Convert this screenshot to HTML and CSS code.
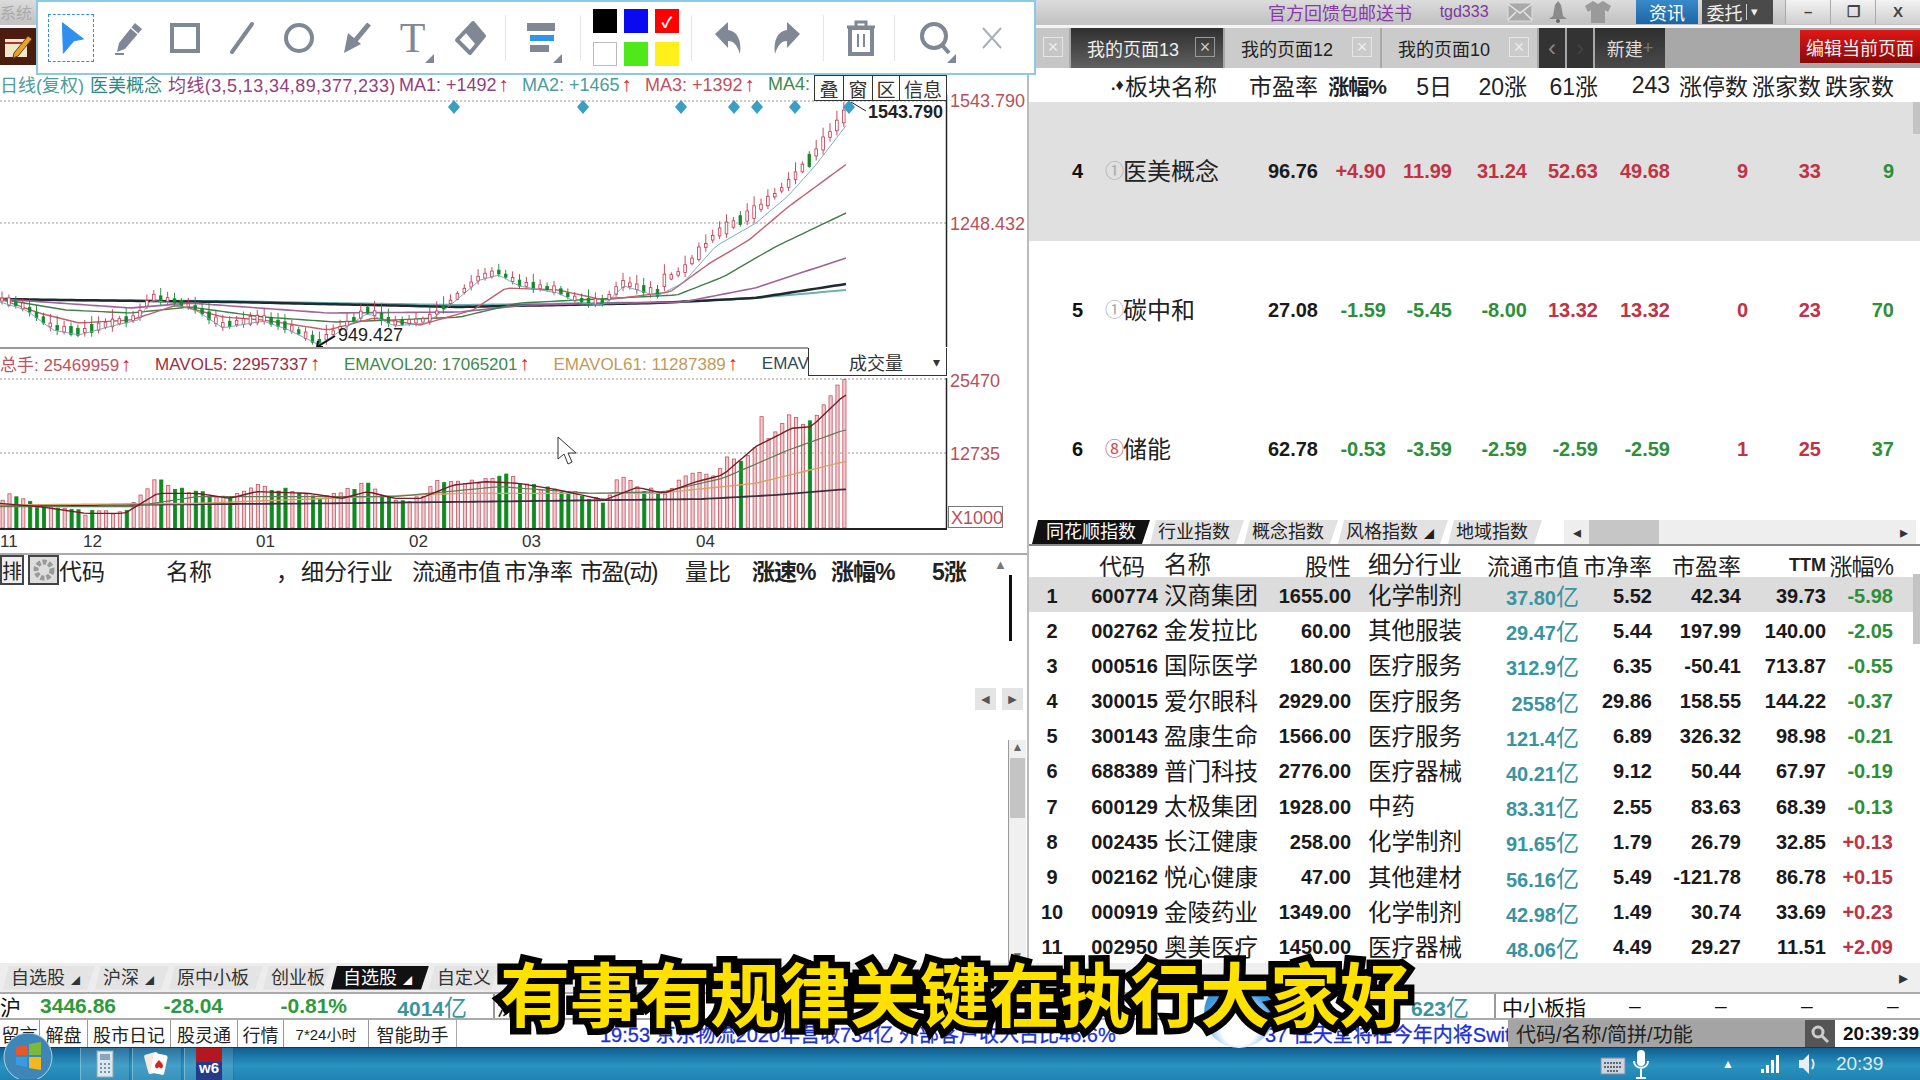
FILE: index.html
```html
<!DOCTYPE html>
<html lang="zh-CN">
<head>
<meta charset="utf-8">
<title>行情软件</title>
<link rel="stylesheet" href="styles.css">
</head>
<body>
<div class="app">

  <header class="topbar">
    <span class="sys">系统</span>
    <span class="promo">官方回馈包邮送书</span>
    <span class="user">tgd333</span>
    <svg class="ti ti-mail" width="26" height="20" viewBox="0 0 26 20"><rect x="1" y="1" width="24" height="18" fill="#a9a9a9" stroke="#ddd"/><path d="M1 2l12 9 12-9M1 18l8-8M25 18l-8-8" fill="none" stroke="#e6e6e6" stroke-width="1.5"/></svg>
    <svg class="ti ti-bell" width="20" height="22" viewBox="0 0 20 22"><path d="M10 0l3 4 2 11 4 3H1l4-3 2-11z" fill="#8a8a8a"/><circle cx="10" cy="20" r="2" fill="#666"/></svg>
    <svg class="ti ti-shirt" width="26" height="22" viewBox="0 0 26 22"><path d="M8 0l5 3 5-3 8 5-3 6-3-2v13H6V9l-3 2-3-6z" fill="#9a9a9a"/></svg>
    <span class="btn-news">资讯</span>
    <span class="btn-order">委托<i class="sep"></i><i class="caret">▾</i></span>
    <span class="winbtns"><b>–</b><b>❐</b><b>X</b></span>
  </header>

  <nav class="tabrow">
    <div class="tabrow-left">
      <div class="brand">
        <svg width="30" height="28" viewBox="0 0 30 28"><rect x="1" y="6" width="22" height="18" fill="#f3e6c8"/><path d="M1 10h22" stroke="#a33" stroke-width="2"/><path d="M10 20L24 3l4 3-14 17-5 2z" fill="#e6a52a" stroke="#6b3a10"/></svg>
      </div>
    </div>
    <div class="tab stub"><span class="x">×</span></div>
    <div class="tab active">我的页面13<span class="x">×</span></div>
    <div class="tab">我的页面12<span class="x">×</span></div>
    <div class="tab">我的页面10<span class="x">×</span></div>
    <div class="navbtn">‹</div>
    <div class="navbtn dim">›</div>
    <div class="newbtn">新建<span>+</span></div>
    <div class="tabspace"></div>
    <div class="editbtn">编辑当前页面</div>
  </nav>

  <main class="main">
    <section class="left">
      <div class="legend">
        <span class="teal lg-a">日线(复权)</span>
        <span class="dteal lg-b">医美概念</span>
        <span class="purple lg-c">均线(3,5,13,34,89,377,233)</span>
        <span class="purple lg-d">MA1: +1492<i class="up">↑</i></span>
        <span class="teal lg-e">MA2: +1465<i class="up">↑</i></span>
        <span class="rose lg-e">MA3: +1392<i class="up">↑</i></span>
        <span class="dgreen lg-e">MA4:</span>
      </div>
      <svg id="price" class="chart price" width="1027" height="252" viewBox="0 95 1027 252"></svg>
      <div class="vol-legend">
        <span class="rose">总手: 25469959<i class="up">↑</i></span>
        <span class="maroon">MAVOL5: 22957337<i class="up">↑</i></span>
        <span class="dgreen">EMAVOL20: 17065201<i class="up">↑</i></span>
        <span class="tan">EMAVOL61: 11287389<i class="up">↑</i></span>
        <span class="navy">EMAV</span>
      </div>
      <svg id="volume" class="chart vol" width="1027" height="150" viewBox="0 378 1027 150"></svg>
      <div class="dates">
        <span class="d1">11</span><span class="d2">12</span><span class="d3">01</span><span class="d4">02</span><span class="d5">03</span><span class="d6">04</span>
      </div>
      <div class="list">
        <div class="list-head">
          <span class="lbox">排</span>
          <span class="lbox gear"><svg width="26" height="26" viewBox="0 0 26 26"><circle cx="13" cy="13" r="8" fill="none" stroke="#999" stroke-width="5" stroke-dasharray="4 2"/></svg></span>
          <span class="h-code">代码</span>
          <span class="h-name">名称</span>
          <span class="h-dot">，</span>
          <span class="h-ind">细分行业</span>
          <span class="h-cap">流通市值</span>
          <span class="h-pb">市净率</span>
          <span class="h-pe">市盈(动)</span>
          <span class="h-vr">量比</span>
          <span class="h-sp bold">涨速%</span>
          <span class="h-ch bold">涨幅%</span>
          <span class="h-5 bold">5涨</span>
        </div>
        <div class="sb-up">▲</div>
        <div class="sb-thumb"></div>
        <div class="sb-h"><span>◄</span><span>►</span></div>
        <div class="sb-col"><span>▲</span><i></i><span>▼</span></div>
      </div>
    </section>

    <section class="right">
      <div class="sector">
        <div class="srow shead">
          <span class="s-no"></span><span class="s-name"><b>.♦</b>板块名称</span><span>市盈率</span><span class="bold-pc">涨幅%</span><span>5日</span><span>20涨</span><span>61涨</span><span>243</span><span>涨停数</span><span>涨家数</span><span>跌家数</span>
        </div>
        <div class="srow sel">
          <span class="s-no">4</span><span class="s-name"><i class="ico">①</i>医美概念</span><span class="k">96.76</span><span class="r">+4.90</span><span class="r">11.99</span><span class="r">31.24</span><span class="r">52.63</span><span class="r">49.68</span><span class="r">9</span><span class="r">33</span><span class="g">9</span>
        </div>
        <div class="srow">
          <span class="s-no">5</span><span class="s-name"><i class="ico">①</i>碳中和</span><span class="k">27.08</span><span class="g">-1.59</span><span class="g">-5.45</span><span class="g">-8.00</span><span class="r">13.32</span><span class="r">13.32</span><span class="r">0</span><span class="r">23</span><span class="g">70</span>
        </div>
        <div class="srow">
          <span class="s-no">6</span><span class="s-name"><i class="ico red">⑧</i>储能</span><span class="k">62.78</span><span class="g">-0.53</span><span class="g">-3.59</span><span class="g">-2.59</span><span class="g">-2.59</span><span class="g">-2.59</span><span class="r">1</span><span class="r">25</span><span class="g">37</span>
        </div>
        <div class="vbar vbar-top"></div>
      </div>

      <div class="idx-tabs">
        <span class="itab on">同花顺指数</span><span class="itab">行业指数</span><span class="itab">概念指数</span><span class="itab">风格指数<i>◢</i></span><span class="itab">地域指数</span>
        <div class="hscroll"><span class="arr">◂</span><i class="thumb"></i><span class="arr end">▸</span></div>
      </div>

      <div class="stocks">
        <div class="row thead"><span></span><span class="hc">代码</span><span class="n">名称</span><span>股性</span><span class="ind">细分行业</span><span>流通市值</span><span>市净率</span><span>市盈率</span><span class="b ttm">TTM</span><span class="pc">涨幅%</span></div>
        <div class="row sel"><span class="no">1</span><span class="b">600774</span><span class="n">汉商集团</span><span class="b">1655.00</span><span class="ind">化学制剂</span><span class="t">37.80<em>亿</em></span><span class="b">5.52</span><span class="b">42.34</span><span class="b">39.73</span><span class="g">-5.98</span></div>
        <div class="row"><span class="no">2</span><span class="b">002762</span><span class="n">金发拉比</span><span class="b">60.00</span><span class="ind">其他服装</span><span class="t">29.47<em>亿</em></span><span class="b">5.44</span><span class="b">197.99</span><span class="b">140.00</span><span class="g">-2.05</span></div>
        <div class="row"><span class="no">3</span><span class="b">000516</span><span class="n">国际医学</span><span class="b">180.00</span><span class="ind">医疗服务</span><span class="t">312.9<em>亿</em></span><span class="b">6.35</span><span class="b">-50.41</span><span class="b">713.87</span><span class="g">-0.55</span></div>
        <div class="row"><span class="no">4</span><span class="b">300015</span><span class="n">爱尔眼科</span><span class="b">2929.00</span><span class="ind">医疗服务</span><span class="t">2558<em>亿</em></span><span class="b">29.86</span><span class="b">158.55</span><span class="b">144.22</span><span class="g">-0.37</span></div>
        <div class="row"><span class="no">5</span><span class="b">300143</span><span class="n">盈康生命</span><span class="b">1566.00</span><span class="ind">医疗服务</span><span class="t">121.4<em>亿</em></span><span class="b">6.89</span><span class="b">326.32</span><span class="b">98.98</span><span class="g">-0.21</span></div>
        <div class="row"><span class="no">6</span><span class="b">688389</span><span class="n">普门科技</span><span class="b">2776.00</span><span class="ind">医疗器械</span><span class="t">40.21<em>亿</em></span><span class="b">9.12</span><span class="b">50.44</span><span class="b">67.97</span><span class="g">-0.19</span></div>
        <div class="row"><span class="no">7</span><span class="b">600129</span><span class="n">太极集团</span><span class="b">1928.00</span><span class="ind">中药</span><span class="t">83.31<em>亿</em></span><span class="b">2.55</span><span class="b">83.63</span><span class="b">68.39</span><span class="g">-0.13</span></div>
        <div class="row"><span class="no">8</span><span class="b">002435</span><span class="n">长江健康</span><span class="b">258.00</span><span class="ind">化学制剂</span><span class="t">91.65<em>亿</em></span><span class="b">1.79</span><span class="b">26.79</span><span class="b">32.85</span><span class="r">+0.13</span></div>
        <div class="row"><span class="no">9</span><span class="b">002162</span><span class="n">悦心健康</span><span class="b">47.00</span><span class="ind">其他建材</span><span class="t">56.16<em>亿</em></span><span class="b">5.49</span><span class="b">-121.78</span><span class="b">86.78</span><span class="r">+0.15</span></div>
        <div class="row"><span class="no">10</span><span class="b">000919</span><span class="n">金陵药业</span><span class="b">1349.00</span><span class="ind">化学制剂</span><span class="t">42.98<em>亿</em></span><span class="b">1.49</span><span class="b">30.74</span><span class="b">33.69</span><span class="r">+0.23</span></div>
        <div class="row"><span class="no">11</span><span class="b">002950</span><span class="n">奥美医疗</span><span class="b">1450.00</span><span class="ind">医疗器械</span><span class="t">48.06<em>亿</em></span><span class="b">4.49</span><span class="b">29.27</span><span class="b">11.51</span><span class="r">+2.09</span></div>
        <div class="vbar vbar-stocks"></div>
      </div>
    </section>
  </main>

  <div class="bottomtabs">
    <div class="btabs">
      <span class="btab w1">自选股<i>◢</i></span><span class="btab w2">沪深<i>◢</i></span><span class="btab w3">原中小板</span><span class="btab w4">创业板</span><span class="btab on w5">自选股<i>◢</i></span><span class="btab w6">自定义</span>
    </div>
    <div class="bscroll"><span>▸</span></div>
  </div>

  <div class="indexbar">
    <span class="i-name">沪</span>
    <span class="i-v v1">3446.86</span>
    <span class="i-v v2">-28.04</span>
    <span class="i-v v3">-0.81%</span>
    <span class="i-a a1">4014<em>亿</em></span>
    <span class="i-sep s1"></span>
    <span class="i-name n2">深</span>
    <span class="i-a a2">623<em>亿</em></span>
    <span class="i-sep s2"></span>
    <span class="i-zx">中小板指</span>
    <span class="i-dash">–</span><span class="i-dash">–</span><span class="i-dash">–</span><span class="i-dash d-last">–</span>
  </div>

  <div class="newsbar">
    <div class="links">
      <span class="l1">留言</span><span class="l2">解盘</span><span class="l3">股市日记</span><span class="l4">股灵通</span><span class="l5">行情</span><span class="l6">7*24小时</span><span class="l7">智能助手</span>
    </div>
    <div class="ticker">
      <span class="t1">19:53 京东物流2020年营收734亿 外部客户收入占比46.6%</span>
      <span class="t2">37 任天堂将在今年内将Swit</span>
    </div>
    <div class="search">
      <span class="s-text">代码/名称/简拼/功能</span>
      <span class="s-btn"><svg width="20" height="20" viewBox="0 0 20 20"><circle cx="8" cy="8" r="5" fill="none" stroke="#ccc" stroke-width="3"/><path d="M12 12l6 6" stroke="#ccc" stroke-width="3"/></svg></span>
    </div>
    <div class="clock">20:39:39</div>
  </div>

  <footer class="taskbar">
    <div class="orb">
      <svg width="58" height="46" viewBox="0 0 58 46"><circle cx="28" cy="24" r="24" fill="#3f86b8" stroke="#a9d3e8"/><path d="M16 14l11-2v10H16z" fill="#e8562a"/><path d="M29 11l12-2v13H29z" fill="#7ab93a"/><path d="M16 24h11v10l-11-2z" fill="#3a9ae0"/><path d="M29 24h12v13l-12-2z" fill="#f2b81e"/></svg>
    </div>
    <div class="task">
      <svg width="20" height="30" viewBox="0 0 20 30"><rect x="2" y="2" width="16" height="26" fill="#dbe8f0" stroke="#8aa"/><rect x="5" y="5" width="10" height="6" fill="#8aa4b8"/><path d="M5 15h10M5 19h10M5 23h10" stroke="#7a94a8" stroke-width="2" stroke-dasharray="2 2"/></svg>
    </div>
    <div class="task">
      <svg width="28" height="30" viewBox="0 0 28 30"><rect x="3" y="4" width="14" height="20" rx="2" transform="rotate(-15 10 14)" fill="#f3e9e0"/><rect x="9" y="5" width="14" height="20" rx="2" transform="rotate(12 16 15)" fill="#fff"/><path d="M16 11c4 4 5 6 3 8-1 1-2 0-3-1-1 1-2 2-3 1-2-2-1-4 3-8z" fill="#d22"/></svg>
    </div>
    <div class="task">
      <svg width="26" height="33" viewBox="0 0 26 33"><rect width="26" height="33" fill="#263a8a"/><rect width="26" height="14" fill="#b3171f"/><text x="3" y="25" font-size="15" font-weight="700" fill="#fff" font-family="Liberation Sans">w6</text></svg>
    </div>
    <div class="tray">
      <svg class="tr-kb" width="26" height="22" viewBox="0 0 26 22"><rect x="1" y="5" width="24" height="16" fill="#c9d6dc" stroke="#88a"/><path d="M4 10h18M4 14h18M7 18h12" stroke="#667" stroke-width="2" stroke-dasharray="2 1"/></svg>
      <svg class="tr-mic" width="18" height="30" viewBox="0 0 18 30"><rect x="5" y="1" width="8" height="16" rx="4" fill="#fff"/><path d="M2 12c0 9 14 9 14 0M9 20v8M4 29h10" fill="none" stroke="#fff" stroke-width="2"/></svg>
      <span class="tr-up">▲</span>
      <svg class="tr-sig" width="20" height="18" viewBox="0 0 20 18"><path d="M1 18h3v-4H1zM6 18h3v-8H6zM11 18h3V5h-3zM16 18h3V0h-3z" fill="#fff"/></svg>
      <svg class="tr-spk" width="20" height="22" viewBox="0 0 20 22"><path d="M1 7h4l6-6v20l-6-6H1z" fill="#e8eef2"/><path d="M14 6c2 3 2 7 0 10" fill="none" stroke="#dfe8ee" stroke-width="2"/></svg>
      <span class="tr-time">20:39</span>
    </div>
  </footer>

  <div class="toolbar">
    <span class="tool"><svg class="focus" width="46" height="48" viewBox="0 0 46 48"><path d="M14 8l22 17-10 2-11 13z" fill="#2f8fee" stroke="#2f8fee" stroke-linejoin="round"/></svg></span>
    <span class="tool"><svg width="34" height="36" viewBox="0 0 34 36"><path d="M24 3l7 6-17 20-8 3 2-9z" fill="#7f8894"/><path d="M20 8l7 6" stroke="#fff" stroke-width="1.5"/><path d="M4 34h9" stroke="#7f8894" stroke-width="2"/></svg></span>
    <span class="tool"><svg width="34" height="36" viewBox="0 0 34 36"><rect x="4" y="5" width="26" height="26" fill="none" stroke="#7f8894" stroke-width="4"/></svg></span>
    <span class="tool"><svg width="34" height="36" viewBox="0 0 34 36"><path d="M7 32L27 4" stroke="#7f8894" stroke-width="4" stroke-linecap="round"/></svg></span>
    <span class="tool"><svg width="34" height="36" viewBox="0 0 34 36"><circle cx="17" cy="18" r="13" fill="none" stroke="#7f8894" stroke-width="4"/></svg></span>
    <span class="tool"><svg width="34" height="36" viewBox="0 0 34 36"><path d="M30 4L15 22" stroke="#7f8894" stroke-width="5"/><path d="M5 33l4-20 13 11z" fill="#7f8894"/></svg></span>
    <span class="tool corner"><span class="tool-t">T</span></span>
    <span class="tool"><svg width="34" height="36" viewBox="0 0 34 36"><path d="M20 3l11 13-14 17L4 20z" fill="#fff" stroke="#7f8894" stroke-width="4" stroke-linejoin="round"/><path d="M20 3l11 13-8 9-11-13z" fill="#7f8894"/></svg></span>
    <i class="div d-a"></i>
    <span class="tool corner t-lines"><svg width="34" height="36" viewBox="0 0 34 36"><rect x="3" y="3" width="28" height="8" fill="#7f8894"/><rect x="6" y="15" width="24" height="6" fill="#2f96ee"/><rect x="6" y="25" width="19" height="7" fill="#7f8894"/></svg></span>
    <i class="div d-b"></i>
    <div class="swatches">
      <i class="sw s-black"></i><i class="sw s-blue"></i><i class="sw s-red">✓</i>
      <i class="sw s-white"></i><i class="sw s-green"></i><i class="sw s-yellow"></i>
    </div>
    <i class="div d-c"></i>
    <span class="tool t-undo"><svg width="34" height="36" viewBox="0 0 34 36"><path d="M3 14L16 2v8c9 1 14 10 12 24-3-9-6-13-12-13v7z" fill="#7f8894"/></svg></span>
    <span class="tool"><svg width="34" height="36" viewBox="0 0 34 36"><path d="M31 14L18 2v8C9 11 4 20 6 34c3-9 6-13 12-13v7z" fill="#7f8894"/></svg></span>
    <i class="div d-d"></i>
    <span class="tool t-trash"><svg width="34" height="36" viewBox="0 0 34 36"><path d="M3 7h28M12 6V2h10v4" fill="none" stroke="#7f8894" stroke-width="3"/><path d="M6 8h22v26H6z" fill="none" stroke="#7f8894" stroke-width="4"/><path d="M14 14v13M20 14v13" stroke="#7f8894" stroke-width="2"/></svg></span>
    <i class="div d-e"></i>
    <span class="tool corner t-search"><svg width="34" height="36" viewBox="0 0 34 36"><circle cx="16" cy="16" r="12" fill="none" stroke="#7f8894" stroke-width="4"/><path d="M24 25l7 8" stroke="#7f8894" stroke-width="4"/></svg></span>
    <span class="tool t-x"><svg width="26" height="26" viewBox="0 0 26 26"><path d="M4 3l18 20M22 3L4 23" stroke="#a9afb6" stroke-width="2"/></svg></span>
  </div>

  <div class="float-btns"><span class="fb w-a">叠</span><span class="fb w-a">窗</span><span class="fb w-b">区</span><span class="fb w-c">信息</span></div>
  <div class="vol-select"><span>成交量</span><i>▾</i></div>
  <svg class="cursor" width="22" height="30" viewBox="0 0 22 30"><path d="M2 1v22l6-5 4 10 4-2-4-9h8z" fill="#fff" stroke="#333"/></svg>
  <div class="bubble"></div>
  <div class="caption">有事有规律关键在执行大家好</div>
</div>
<script src="chart.js"></script>
</body>
</html>
```

FILE: styles.css
```css
* { box-sizing: border-box; }
html, body { margin: 0; padding: 0; background: #fff; }
body { font-family: "Liberation Sans", "Noto Sans CJK SC", sans-serif; color: #111; }
i, em { font-style: normal; }
.app { position: relative; width: 1920px; height: 1080px; overflow: hidden; display: flex; flex-direction: column; }

/* top bar */
.topbar { height: 28px; flex: none; display: flex; align-items: center; background: linear-gradient(#dcdcdc, #c4c4c4 85%); border-bottom: 3px solid #f4f4f4; padding-bottom: 2px; }
.sys { font-size: 16px; color: #aaa; margin-right: 1233px; width: 35px; white-space: nowrap; }
.promo { width: 172px; font-size: 18px; color: #8a3aa8; white-space: nowrap; }
.user { width: 67px; font-size: 16px; color: #7a3a9a; }
.ti { flex: none; }
.ti-bell { margin-left: 15px; }
.ti-shirt { margin-left: 17px; }
.btn-news { margin-left: 25px; width: 63px; height: 25px; background: linear-gradient(#3a8ccc, #1b65a5); color: #fff; font-size: 18px; display: flex; align-items: center; justify-content: center; }
.btn-order { margin-left: 4px; width: 71px; height: 25px; background: #4a4a4a; color: #eee; font-size: 18px; display: flex; align-items: center; padding-left: 4px; gap: 4px; }
.btn-order .sep { width: 1px; height: 16px; background: #ccc; }
.btn-order .caret { font-size: 13px; }
.winbtns { margin-left: 12px; width: 135px; height: 25px; display: flex; background: linear-gradient(#f4f4f4, #cfcfcf); }
.winbtns b { flex: 1; border-left: 1px solid #aaa; display: flex; align-items: center; justify-content: center; font-size: 15px; color: #444; }

/* tab row */
.tabrow { height: 40px; flex: none; display: flex; background: #a8a8a8; }
.tabrow-left { width: 1036px; background: #fff; flex: none; }
.brand { width: 37px; height: 37px; background: #4a1d10; display: flex; align-items: center; justify-content: center; }
.tab { width: 155px; margin-right: 2px; background: #cbcbcb; color: #222; font-size: 18px; display: flex; align-items: center; padding-left: 16px; position: relative; flex: none; }
.tab.stub { width: 33px; margin-right: 2px; padding: 0; background: #c6c6c6; }
.tab.active { width: 152px; background: linear-gradient(#2f2f2f, #606060); color: #eee; }
.tab .x { position: absolute; right: 8px; top: 9px; width: 20px; height: 20px; font-size: 18px; line-height: 18px; text-align: center; border: 1px solid #e6e6e6; color: #eee; }
.tab.stub .x { right: 6px; }
.tab.active .x { color: #ccc; border-color: #999; }
.navbtn { width: 26px; margin-right: 2px; background: #333; color: #888; font-size: 24px; display: flex; align-items: center; justify-content: center; flex: none; }
.navbtn.dim { color: #444; }
.newbtn { width: 70px; background: linear-gradient(#2e2e2e, #4a4a4a); color: #ddd; font-size: 18px; display: flex; align-items: center; justify-content: center; flex: none; }
.newbtn span { color: #777; }
.tabspace { flex: 1; }
.editbtn { width: 120px; margin: 2px 0 5px; background: linear-gradient(#e01818, #8a0808); color: #f4f4f4; font-size: 18px; display: flex; align-items: center; justify-content: center; white-space: nowrap; }

/* main */
.main { height: 895px; flex: none; display: flex; }
.left { width: 1029px; flex: none; border-right: 2px solid #bbb; display: flex; flex-direction: column; }
.right { flex: 1; min-width: 0; display: flex; flex-direction: column; position: relative; }

.legend { height: 27px; padding-top: 5px; display: flex; align-items: center; font-size: 18px; white-space: nowrap; overflow: hidden; width: 814px; flex: none; }
.legend span { flex: none; }
.lg-a { width: 90px; }
.lg-b { width: 78px; }
.lg-c { width: 231px; letter-spacing: 0.4px; }
.lg-d { width: 123px; }
.lg-e { width: 123px; }
.teal { color: #4b9d9b; }
.dteal { color: #2a8a80; }
.purple { color: #923f7f; }
.rose { color: #c4505e; }
.maroon { color: #9b2f3f; }
.dgreen { color: #3f8a4a; }
.tan { color: #c19a5a; }
.navy { color: #2f4a5a; }
.up { color: #e01a1a; font-weight: 700; margin-left: 2px; font-size: 20px; }
.chart { display: block; flex: none; overflow: visible; }
.vol-legend { height: 31px; border-top: 2px solid #999; display: flex; align-items: center; gap: 24px; font-size: 17px; white-space: nowrap; overflow: hidden; width: 808px; flex: none; }
.vol-legend span { flex: none; }
.dates { height: 25px; flex: none; position: relative; font-size: 17px; color: #333; display: flex; align-items: center; border-top: 2px solid #222; width: 947px; }
.d1 { width: 83px; }
.d2 { width: 173px; }
.d3 { width: 153px; }
.d4 { width: 113px; }
.d5 { width: 174px; }

/* list */
.list { flex: 1; position: relative; border-top: 2px solid #aaa; }
.list-head { height: 30px; display: flex; align-items: center; font-size: 23px; white-space: nowrap; color: #222; }
.list-head > span { flex: none; }
.lbox { width: 24px; height: 30px; border: 2px solid #444; font-size: 20px; display: flex; align-items: center; justify-content: center; margin-right: 4px; background: #eee; }
.lbox.gear { width: 31px; margin-right: 0; background: #ddd; }
.bold { font-weight: 700; }
.h-code { width: 107px; }
.h-name { width: 110px; }
.h-dot { width: 25px; }
.h-ind { width: 111px; }
.h-cap { width: 92px; letter-spacing: -1px; }
.h-pb { width: 76px; }
.h-pe { width: 105px; letter-spacing: -1.5px; }
.h-vr { width: 67px; }
.h-sp { width: 79px; letter-spacing: -1px; }
.h-ch { width: 101px; letter-spacing: -1px; }
.h-5 { width: 40px; letter-spacing: -1px; }
.sb-up { position: absolute; left: 994px; top: 2px; font-size: 13px; color: #777; }
.sb-thumb { position: absolute; left: 1009px; top: 20px; height: 66px; width: 3px; background: #111; }
.sb-h { position: absolute; left: 975px; top: 133px; display: flex; gap: 6px; font-size: 14px; color: #555; }
.sb-h span { width: 21px; height: 22px; background: #e4e4e4; display: flex; align-items: center; justify-content: center; }
.sb-col { position: absolute; left: 1008px; top: 185px; bottom: 0; width: 18px; background: #f0f0f0; border-left: 1px solid #999; display: flex; flex-direction: column; align-items: center; font-size: 12px; color: #666; justify-content: space-between; }
.sb-col i { position: absolute; top: 18px; left: 1px; width: 15px; height: 60px; background: #c4c4c4; }

/* sector table */
.sector { height: 452px; flex: none; position: relative; }
.srow { display: grid; grid-template-columns: 54px 156px 79px 68px 66px 75px 71px 72px 78px 73px 73px; height: 139px; align-items: center; font-size: 20px; font-weight: 700; text-align: right; }
.srow.shead { height: 34px; padding-bottom: 3px; font-size: 23px; font-weight: 400; color: #222; white-space: nowrap; }
.srow.sel { background: #e0e0e0; }
.s-no { text-align: right; }
.s-name { text-align: left; padding-left: 22px; padding-bottom: 4px; font-size: 24px; font-weight: 400; color: #222; white-space: nowrap; display: flex; align-items: center; }
.shead .s-name { padding-left: 28px; padding-bottom: 0; font-size: 23px; }
.s-name b { font-size: 16px; width: 14px; }
.ico { font-size: 19px; color: #aaa; width: 18px; flex: none; }
.ico.red { color: #d24a4a; }
.bold-pc { font-weight: 700; font-size: 21px; letter-spacing: -1px; }
.k { color: #1a1a1a; }
.r { color: #bf3344; }
.g { color: #2e8f3a; }
.vbar { position: absolute; right: 0; width: 7px; background: #c4c4c4; }
.vbar-top { top: 34px; height: 32px; }
.vbar-stocks { top: 28px; height: 70px; }

/* index tabs */
.idx-tabs { height: 26px; flex: none; display: flex; align-items: flex-end; border-bottom: 2px solid #888; padding-left: 3px; position: relative; background: #fff; }
.itab { height: 24px; padding: 0 14px 0 8px; font-size: 18px; line-height: 24px; color: #222; background: #e2e2e2; white-space: nowrap; clip-path: polygon(6px 0, 100% 0, calc(100% - 8px) 100%, 0 100%); }
.itab.on { background: #111; color: #fff; padding: 0 14px; }
.itab i { font-size: 10px; margin-left: 6px; }
.hscroll { width: 352px; margin-left: 22px; height: 24px; background: #eee; display: flex; align-items: center; position: relative; font-size: 16px; color: #333; }
.hscroll .arr { width: 25px; text-align: center; }
.hscroll .thumb { width: 70px; height: 24px; background: #c6c6c6; }
.hscroll .end { position: absolute; right: 0; }

/* stocks */
.stocks { flex: 1; overflow: hidden; position: relative; }
.row { display: grid; grid-template-columns: 46px 83px 103px 90px 112px 116px 73px 89px 85px 67px; height: 35.2px; align-items: center; font-size: 20px; text-align: right; white-space: nowrap; color: #1a1a1a; }
.row.thead { height: 31px; padding-bottom: 3px; font-size: 23px; color: #222; }
.row.thead .hc { padding-right: 13px; }
.row.thead .ttm { font-size: 18px; }
.row.thead .pc { letter-spacing: -1px; }
.row.sel { background: #dcdcdc; }
.row .no { text-align: center; font-weight: 700; }
.row .b { font-weight: 700; }
.row .n, .row .ind { font-size: 23.5px; padding-bottom: 4px; }
.row .n { text-align: left; padding-left: 6px; }
.row .ind { text-align: left; padding-left: 17px; }
.row .t { color: #3a94a0; font-weight: 700; padding-bottom: 2px; }
.row .t em, .i-a em { font-weight: 400; font-size: 23px; }
.row .g { color: #2e8f3a; font-weight: 700; }
.row .r { color: #bf3344; font-weight: 700; }

/* bottom */
.bottomtabs { height: 29px; flex: none; display: flex; background: #efefef; }
.btabs { width: 1029px; display: flex; flex: none; align-items: center; font-size: 18px; background: #ededed; border-right: 2px solid #ccc; overflow: hidden; }
.btab { height: 24px; line-height: 24px; white-space: nowrap; padding-left: 8px; color: #333; background: #e4e4e4; clip-path: polygon(6px 0, 100% 0, calc(100% - 8px) 100%, 0 100%); flex: none; }
.btab i { font-size: 9px; margin-left: 6px; }
.btab.on { background: #111; color: #fff; padding-left: 12px; }
.w1 { width: 92px; margin-left: 3px; }
.w2 { width: 74px; }
.w3 { width: 94px; }
.w4 { width: 68px; }
.w5 { width: 98px; }
.w6 { width: 70px; }
.bscroll { flex: 1; display: flex; justify-content: flex-end; align-items: center; padding-right: 12px; font-size: 18px; color: #333; }

.indexbar { height: 28px; flex: none; display: flex; align-items: center; border-top: 2px solid #aaa; border-bottom: 2px solid #aaa; font-size: 21px; font-weight: 700; position: relative; overflow: hidden; }
.indexbar > * { flex: none; }
.i-name { width: 20px; font-weight: 400; }
.i-v { color: #2e9a3e; text-align: right; white-space: nowrap; }
.v1 { width: 96px; }
.v2 { width: 107px; }
.v3 { width: 124px; }
.i-a { color: #3a94a0; text-align: right; white-space: nowrap; }
.a1 { width: 120px; }
.i-sep { width: 2px; height: 24px; background: #999; }
.s1 { margin-left: 26px; }
.n2 { margin-left: 2px; }
.a2 { width: 952px; }
.s2 { margin-left: 25px; }
.i-zx { width: 133px; padding-left: 6px; font-size: 21px; font-weight: 400; }
.i-dash { width: 86px; font-weight: 400; }
.d-last { width: 32px; }

.newsbar { height: 27px; flex: none; display: flex; align-items: stretch; font-size: 18px; white-space: nowrap; }
.links { display: flex; width: 457px; flex: none; border-right: 1px solid #aaa; overflow: hidden; }
.links span { border-right: 1px solid #999; display: flex; align-items: center; justify-content: center; color: #222; flex: none; }
.l1 { width: 40px; }
.l2 { width: 48px; }
.l3 { width: 83px; }
.l4 { width: 67px; }
.l5 { width: 46px; }
.l6 { width: 85px; font-size: 15px; }
.l7 { width: 88px; }
.ticker { width: 1051px; flex: none; display: flex; align-items: center; overflow: hidden; color: #1b2fd6; font-size: 20px; }
.t1 { width: 665px; margin-left: 143px; flex: none; -webkit-text-stroke: 0.3px #1b2fd6; }
.t2 { flex: none; -webkit-text-stroke: 0.3px #1b2fd6; }
.search { width: 327px; flex: none; background: #a4a4a4; display: flex; align-items: center; justify-content: space-between; padding-left: 8px; color: #222; font-size: 20px; }
.s-btn { width: 30px; height: 27px; background: #555; display: flex; align-items: center; justify-content: center; }
.clock { flex: 1; background: #fff; font-size: 19px; font-weight: 700; display: flex; align-items: center; padding-left: 8px; overflow: hidden; }

.taskbar { height: 33px; flex: none; display: flex; align-items: center; background: linear-gradient(#0f5f92, #2a93c0 55%, #1f83b2); border-top: 1px solid #0a3e60; position: relative; }
.orb { width: 80px; flex: none; margin-top: -12px; }
.task { width: 50px; height: 33px; margin-right: 2px; display: flex; align-items: center; justify-content: center; background: rgba(255,255,255,.12); border-left: 1px solid rgba(255,255,255,.3); border-right: 1px solid rgba(0,0,0,.2); flex: none; }
.tray { margin-left: auto; width: 320px; padding-right: 20px; display: flex; align-items: center; flex: none; color: #fff; }
.tr-mic { margin-left: 6px; }
.tr-up { margin-left: 72px; font-size: 12px; }
.tr-sig { margin-left: 26px; }
.tr-spk { margin-left: 18px; }
.tr-time { margin-left: 18px; font-size: 19px; color: #dfeaf2; }

/* overlays */
.toolbar { position: absolute; left: 36px; top: 0; width: 1000px; height: 75px; background: #fff; border: 2px solid #8cc9e6; display: flex; align-items: center; padding-left: 4px; z-index: 5; }
.tool { width: 57px; height: 50px; flex: none; display: flex; align-items: center; justify-content: center; position: relative; }
.tool.corner::after { content: ""; position: absolute; right: 7px; bottom: 0; width: 0; height: 0; border-left: 9px solid transparent; border-bottom: 9px solid #7f8894; }
.focus { border: 1px dashed #2f8fee; }
.tool-t { font-family: "Liberation Serif", serif; font-size: 42px; color: #7f8894; line-height: 1; }
.div { width: 1px; height: 46px; background: #e6e6e6; flex: none; }
.d-a { margin-left: 7px; }
.t-lines { margin-left: 6px; }
.d-b { margin-left: 11px; }
.swatches { margin-left: 12px; display: grid; grid-template-columns: repeat(3, 24px); grid-template-rows: 24px 24px; gap: 9px 7px; flex: none; }
.sw { display: flex; align-items: center; justify-content: center; color: #fff; font-size: 15px; font-weight: 700; }
.s-black { background: #000; }
.s-blue { background: #0a0af0; }
.s-red { background: #f00; }
.s-white { background: #fff; border: 1px solid #bbb; }
.s-green { background: #4fe81a; }
.s-yellow { background: #ffef1a; }
.d-c { margin-left: 12px; }
.t-undo { margin-left: 8px; }
.d-d { margin-left: 9px; }
.t-trash { margin-left: 8px; }
.d-e { margin-left: 5px; }
.t-search { margin-left: 11px; }
.float-btns { position: absolute; left: 814px; top: 75px; height: 26px; display: flex; background: #fff; border: 1px solid #333; z-index: 4; font-size: 19px; }
.fb { border-right: 1px solid #333; display: flex; align-items: center; justify-content: center; color: #333; }
.fb:last-child { border-right: 0; }
.w-a { width: 29px; }
.w-b { width: 27px; }
.w-c { width: 46px; }
.vol-select { position: absolute; left: 808px; top: 348px; width: 139px; height: 28px; background: #fff; border: 1px solid #333; border-top: 0; z-index: 4; font-size: 18px; color: #333; display: flex; align-items: center; justify-content: space-between; padding: 0 6px 0 40px; }
.vol-select i { font-size: 14px; }
.cursor { position: absolute; left: 556px; top: 436px; z-index: 4; }
.bubble { position: absolute; left: 1204px; top: 978px; width: 70px; height: 70px; border-radius: 50%; background: radial-gradient(circle at 50% 70%, #fff 0 30%, #3d9be0 60%, #1a78c8); z-index: 3; }
.caption { position: absolute; left: 500px; top: 944px; width: 930px; font-family: "Noto Sans CJK SC", sans-serif; font-weight: 700; font-size: 70px; line-height: 96px; white-space: nowrap; color: #ffe100; -webkit-text-stroke: 13px #000; paint-order: stroke fill; z-index: 6; }
```

FILE: chart.js
```js
// Draws the candlestick and volume charts from data series.
(function () {
  var NS = 'http://www.w3.org/2000/svg';
  var STEP = 6.9, COUNT = 123;

  function add(svg, tag, attrs, text) {
    var el = document.createElementNS(NS, tag);
    for (var k in attrs) el.setAttribute(k, attrs[k]);
    if (text) el.textContent = text;
    svg.appendChild(el);
    return el;
  }
  function lerp(pts, x) {
    if (x <= pts[0][0]) return pts[0][1];
    for (var i = 1; i < pts.length; i++) {
      if (x <= pts[i][0]) {
        var a = pts[i - 1], b = pts[i];
        return a[1] + (b[1] - a[1]) * (x - a[0]) / (b[0] - a[0]);
      }
    }
    return pts[pts.length - 1][1];
  }
  function noise(i) { var s = Math.sin(i * 12.9898) * 43758.5453; return s - Math.floor(s); }
  function line(svg, pts, color, width, dy) {
    add(svg, 'polyline', {
      points: pts.map(function (p) { return p[0] + ',' + (p[1] + (dy || 0)); }).join(' '),
      fill: 'none', stroke: color, 'stroke-width': width || 1.2, 'stroke-linejoin': 'round'
    });
  }
  function dense(pts) {
    var out = [];
    for (var x = 0; x <= 848; x += 6) out.push([x, lerp(pts, x)]);
    return out;
  }

  var greens = [20,40,55,65,80,100,115,135,190,240,262,275,295,308,320,350,410,420,435,450,470,480,535,560,575,590,605,675,755,770,785,805,825,850,865,880,895,910,975,1000,1128,1230]
    .map(function (x) { return Math.round(x / 1.522 / STEP); });

  /* ---------- price ---------- */
  var price = document.getElementById('price');
  var short = [[0,299],[26,307],[53,327],[79,332],[112,323],[138,317],[151,297],[171,300],[197,308],[223,325],[263,318],[289,327],[319,342],[348,323],[368,310],[394,323],[427,320],[453,300],[480,277],[499,272],[519,283],[558,290],[578,300],[604,302],[624,283],[657,293],[683,280],[716,243],[756,220],[788,193],[815,163],[848,120]];
  var ma13 = [[0,299],[39,313],[79,323],[131,320],[177,305],[223,317],[263,320],[328,330],[374,318],[420,325],[473,310],[506,288],[558,290],[604,300],[670,292],[710,263],[749,240],[788,207],[848,163]];
  var ma34 = [[0,299],[66,310],[131,313],[190,307],[263,317],[335,322],[394,320],[460,317],[519,303],[618,298],[677,295],[723,277],[775,247],[846,213]];
  var ma89 = [[0,299],[131,308],[190,303],[328,313],[460,312],[526,305],[683,302],[755,288],[846,258]];
  var ma377 = [[0,299],[66,300],[230,302],[460,307],[657,303],[755,298],[846,284]];
  var ma233 = [[0,300],[223,301],[328,303],[460,305],[683,302],[755,298],[846,290]];

  add(price, 'line', { x1: 0, y1: 101, x2: 946, y2: 101, stroke: '#999', 'stroke-dasharray': '2 2' });
  add(price, 'line', { x1: 0, y1: 223, x2: 946, y2: 223, stroke: '#999', 'stroke-dasharray': '2 2' });
  add(price, 'line', { x1: 946.5, y1: 95, x2: 946.5, y2: 347, stroke: '#222', 'stroke-width': 1.5 });

  line(price, dense(ma233), '#6fb0b0', 2);
  line(price, dense(ma377), '#1d2a30', 2.5);
  line(price, dense(ma89), '#a0649a', 1.6);
  line(price, dense(ma34), '#3f7f4a', 1.4);
  line(price, dense(ma13), '#c2606e', 1.4);

  for (var i = 0; i < COUNT; i++) {
    var x = i * STEP + 2, c = lerp(short, x) - (x > 660 ? 9 : 0);
    var n = noise(i), n2 = noise(i + 200);
    var h = 3 + n * (x > 660 ? 10 : 5);
    var isGreen = greens.indexOf(i) >= 0;
    var color = isGreen ? '#17882a' : '#c8344a';
    add(price, 'line', { x1: x, y1: c - h / 2 - 2 - n2 * 8, x2: x, y2: c + h / 2 + 1 + n2 * 4, stroke: color, 'stroke-width': 0.9 });
    add(price, 'rect', { x: x - 1.3, y: c - h / 2, width: 2.6, height: h, fill: isGreen ? color : '#fff', stroke: color, 'stroke-width': 0.8 });
  }
  line(price, dense(short), '#6aa6b4', 0.9, 3);

  [454, 583, 681, 734, 757, 795, 849].forEach(function (dx) {
    add(price, 'path', { d: 'M' + dx + ' 100l6 7-6 7-6-7z', fill: '#3a9fc2' });
  });

  function text(svg, x, y, str, color, extra) {
    var a = { x: x, y: y, fill: color, 'font-family': 'Liberation Sans', 'font-size': 18 };
    for (var k in (extra || {})) a[k] = extra[k];
    add(svg, 'text', a, str);
  }
  text(price, 950, 107, '1543.790', '#b8505a');
  text(price, 950, 230, '1248.432', '#b8505a');
  text(price, 868, 118, '1543.790', '#222', { 'font-weight': 700 });
  text(price, 338, 341, '949.427', '#222');
  add(price, 'path', { d: 'M851 102l15 9', stroke: '#222', fill: 'none' });
  add(price, 'path', { d: 'M317 347l18-11M317 347l1-6M317 347l6 0', stroke: '#111', 'stroke-width': 2, fill: 'none' });

  /* ---------- volume ---------- */
  var vol = document.getElementById('volume');
  function conv(a) { return a.map(function (p) { return [p[0] / 1.522, 350 + p[1] / 3]; }); }
  var env = conv([[0,460],[20,430],[60,470],[130,490],[190,490],[215,435],[240,385],[250,410],[300,430],[350,450],[390,405],[430,420],[470,430],[500,445],[540,410],[560,405],[600,450],[640,445],[665,400],[690,395],[740,390],[760,370],[800,405],[850,420],[900,445],[920,455],[940,390],[955,378],[975,415],[1010,430],[1035,385],[1060,365],[1090,380],[1105,320],[1130,335],[1150,290],[1160,190],[1170,270],[1205,185],[1220,225],[1240,205],[1255,160],[1265,135],[1280,88],[1290,88]]);
  var v5 = conv([[0,460],[60,470],[130,490],[190,490],[240,430],[300,430],[350,445],[390,425],[470,430],[520,445],[560,425],[600,445],[640,445],[690,405],[740,395],[790,400],[850,420],[920,450],[970,412],[1010,430],[1060,395],[1100,375],[1150,290],[1170,270],[1205,235],[1235,230],[1285,135]]);
  var v20 = conv([[0,470],[200,470],[300,440],[600,440],[760,410],[900,430],[1010,425],[1100,385],[1200,300],[1285,240]]);
  var v61 = conv([[0,465],[300,460],[700,430],[1000,430],[1150,400],[1285,335]]);
  var vL = conv([[0,467],[500,460],[730,455],[1070,447],[1180,435],[1285,418]]);

  add(vol, 'line', { x1: 0, y1: 379, x2: 946, y2: 379, stroke: '#999', 'stroke-dasharray': '2 2' });
  add(vol, 'line', { x1: 0, y1: 453, x2: 946, y2: 453, stroke: '#999', 'stroke-dasharray': '2 2' });
  add(vol, 'line', { x1: 946.5, y1: 378, x2: 946.5, y2: 528, stroke: '#222', 'stroke-width': 1.5 });
  for (var j = 0; j < COUNT; j++) {
    var bx = j * STEP + 1, top = lerp(env, bx + 1.5) + (j < 100 ? noise(j + 50) * 6 - 3 : 0);
    var g = greens.indexOf(j) >= 0;
    add(vol, 'rect', { x: bx, y: top, width: 3.2, height: 528 - top, fill: g ? '#0f8a1e' : '#f0ccd0', stroke: g ? '#0f8a1e' : '#c8505c', 'stroke-width': 0.8 });
  }
  line(vol, dense(vL), '#3a3040', 1.8);
  line(vol, dense(v61), '#d8a06a', 1.4);
  line(vol, dense(v20), '#5f7a55', 1.2);
  line(vol, dense(v5), '#7a1a28', 1.4);

  text(vol, 950, 387, '25470', '#b8505a');
  text(vol, 950, 460, '12735', '#b8505a');
  add(vol, 'rect', { x: 948.5, y: 506.5, width: 54, height: 21, fill: 'none', stroke: '#777' });
  text(vol, 951, 524, 'X1000', '#b8505a');
})();
```
